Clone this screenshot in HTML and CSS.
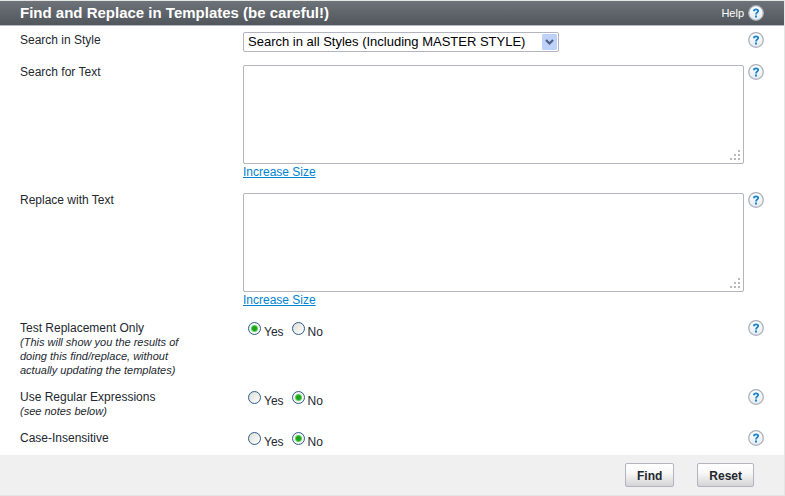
FILE: index.html
```html
<!DOCTYPE html>
<html lang="en">
<head>
<meta charset="utf-8">
<title>Find and Replace in Templates</title>
<link rel="stylesheet" href="styles.css">
</head>
<body>
<svg width="0" height="0" class="defs" aria-hidden="true">
  <defs>
    <linearGradient id="ball" x1="0" y1="0" x2="0" y2="1">
      <stop offset="0" stop-color="#ffffff"/><stop offset="1" stop-color="#e6e9ee"/>
    </linearGradient>
    <symbol id="help" viewBox="0 0 16 16">
      <circle cx="8" cy="8" r="7.3" fill="url(#ball)" stroke="#a9adb9" stroke-width="1.2"/>
      <path d="M5.9 6.2C5.9 4.7 6.8 4.3 8 4.3s2.2.6 2.2 1.7C10.200 7.400 8 7.400 8 9.400" fill="none" stroke="#1583cf" stroke-width="1.8"/>
      <path d="M7 10.600h2v1.900H7z" fill="#1583cf"/>
    </symbol>
    <symbol id="grip" viewBox="0 0 10 10">
      <path d="M8 0h2v2H8zM4 4h2v2H4zM8 4h2v2H8zM0 8h2v2H0zM4 8h2v2H4zM8 8h2v2H8z" fill="#b9b9bc"/>
    </symbol>
  </defs>
</svg>
<form class="panel">
  <header class="head">
    <h1>Find and Replace in Templates (be careful!)</h1>
    <a class="help-link" href="#help">Help <svg class="icon"><use href="#help"/></svg></a>
  </header>

  <div class="row">
    <label for="style">Search in Style</label>
    <div class="select">
      <select id="style"><option>Search in all Styles (Including MASTER STYLE)</option></select>
      <svg class="arrow" viewBox="0 0 15 16"><rect width="15" height="16" rx="1" fill="#bdd2fb"/><path d="M4 6l3.500 3.500L11 6" fill="none" stroke="#4d6185" stroke-width="2.200"/></svg>
    </div>
    <a href="#help-style" aria-label="Help"><svg class="icon"><use href="#help"/></svg></a>
  </div>

  <div class="row">
    <label for="search">Search for Text</label>
    <div>
      <div class="area"><textarea id="search"></textarea><svg class="grip"><use href="#grip"/></svg></div>
      <a class="more" href="#search">Increase Size</a>
    </div>
    <a href="#help-search" aria-label="Help"><svg class="icon"><use href="#help"/></svg></a>
  </div>

  <div class="row">
    <label for="replace">Replace with Text</label>
    <div>
      <div class="area"><textarea id="replace"></textarea><svg class="grip"><use href="#grip"/></svg></div>
      <a class="more" href="#replace">Increase Size</a>
    </div>
    <a href="#help-replace" aria-label="Help"><svg class="icon"><use href="#help"/></svg></a>
  </div>

  <div class="row">
    <div id="test-label">Test Replacement Only<em>(This will show you the results of doing this find/replace, without actually updating the templates)</em></div>
    <div class="choices" role="radiogroup" aria-labelledby="test-label">
      <label><input type="radio" name="test" checked>Yes</label>
      <label><input type="radio" name="test">No</label>
    </div>
    <a href="#help-test" aria-label="Help"><svg class="icon"><use href="#help"/></svg></a>
  </div>

  <div class="row">
    <div id="regex-label">Use Regular Expressions<em>(see notes below)</em></div>
    <div class="choices" role="radiogroup" aria-labelledby="regex-label">
      <label><input type="radio" name="regex">Yes</label>
      <label><input type="radio" name="regex" checked>No</label>
    </div>
    <a href="#help-regex" aria-label="Help"><svg class="icon"><use href="#help"/></svg></a>
  </div>

  <div class="row">
    <div id="case-label">Case-Insensitive</div>
    <div class="choices" role="radiogroup" aria-labelledby="case-label">
      <label><input type="radio" name="case">Yes</label>
      <label><input type="radio" name="case" checked>No</label>
    </div>
    <a href="#help-case" aria-label="Help"><svg class="icon"><use href="#help"/></svg></a>
  </div>

  <footer class="foot">
    <button type="submit">Find</button>
    <button type="reset">Reset</button>
  </footer>
</form>
</body>
</html>
```
FILE: styles.css
```css
* { box-sizing: border-box; }

body {
  margin: 0;
  background: #fff;
  color: #23282f;
  font: 12px/16px "Liberation Sans", Arial, sans-serif;
}

.defs { position: absolute; }

.panel {
  border: 1px solid #e4e6e6;
  border-left: 0;
}

.head {
  display: flex;
  align-items: center;
  justify-content: space-between;
  height: 25px;
  padding: 0 20px;
  border-bottom: 1px solid #b5b9c2;
  background: linear-gradient(#6d7379, #50565c);
  color: #fff;
}

.head h1 {
  margin: 0;
  font-size: 15px;
  line-height: 16px;
}

.help-link {
  display: flex;
  align-items: center;
  gap: 4px;
  color: #fff;
  font-size: 11px;
  text-decoration: none;
}

.icon {
  display: block;
  width: 16px;
  height: 16px;
}

.row {
  display: grid;
  grid-template-columns: 219px 1fr 16px;
  column-gap: 4px;
  padding: 6px 20px;
}

.row em {
  display: block;
  max-width: 175px;
  margin-top: -1px;
  font-size: 11px;
  line-height: 14px;
}

.select {
  position: relative;
  justify-self: start;
}

select {
  appearance: none;
  display: block;
  height: 20px;
  padding: 0 32px 0 4px;
  border: 1px solid #b2b4bf;
  border-radius: 2px;
  background: #fff;
  color: #000;
  font: 13px/18px "Liberation Sans", Arial, sans-serif;
}

.arrow {
  position: absolute;
  top: 2px;
  right: 2px;
  width: 15px;
  height: 16px;
  pointer-events: none;
}

.area {
  position: relative;
  margin-top: 1px;
}

textarea {
  display: block;
  width: 100%;
  height: 99px;
  padding: 2px;
  border: 1px solid #b2b4bf;
  border-radius: 2px;
  resize: none;
  font: inherit;
}

.grip {
  position: absolute;
  right: 4px;
  bottom: 4px;
  width: 10px;
  height: 10px;
}

.more {
  display: block;
  width: max-content;
  color: #0084d0;
}

.choices {
  display: flex;
  gap: 8px;
  height: 19px;
  padding-left: 5px;
}

.choices label {
  display: flex;
  align-items: flex-end;
  gap: 3px;
  line-height: 14px;
}

.choices input {
  appearance: none;
  align-self: flex-start;
  width: 13px;
  height: 13px;
  margin: 2px 0;
  border: 1px solid #2d5c8a;
  border-radius: 50%;
  background: linear-gradient(135deg, #dcdcd7, #fff);
}

.choices input:checked {
  background: radial-gradient(circle, #21a121 0 2px, #55d551 3px, #f3f3f0 4px);
}

.foot {
  display: flex;
  justify-content: flex-end;
  gap: 23px;
  padding: 8px 30px;
  background: #f0f0f0;
}

button {
  height: 24px;
  padding: 2px 11px 0;
  border: 1px solid #b2b4bf;
  border-radius: 2px;
  background: linear-gradient(#fff, #f8f8f8 40%, #d4d4d4);
  color: #23282f;
  font: bold 12px/16px "Liberation Sans", Arial, sans-serif;
}
```
